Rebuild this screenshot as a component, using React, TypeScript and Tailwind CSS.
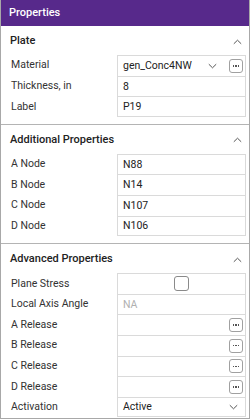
import { ReactNode } from "react";

type Row = {
  label: string;
  value?: ReactNode;
};

function ChevronUp() {
  return (
    <svg width="9" height="6" viewBox="0 0 9 6" fill="none">
      <path d="M0.8 4.8L4.5 1.2L8.2 4.8" stroke="#555" strokeWidth="1" />
    </svg>
  );
}

function ChevronDown() {
  return (
    <svg width="9" height="6" viewBox="0 0 9 6" fill="none">
      <path d="M0.8 1.2L4.5 4.8L8.2 1.2" stroke="#555" strokeWidth="1" />
    </svg>
  );
}

function DotsButton() {
  return (
    <div className="w-[14px] h-[14px] rounded-[3px] border border-[#a0a0a0] bg-white flex items-center justify-center gap-[1px]">
      <span className="w-[1.5px] h-[1.5px] bg-[#555]" />
      <span className="w-[1.5px] h-[1.5px] bg-[#555]" />
      <span className="w-[1.5px] h-[1.5px] bg-[#555]" />
    </div>
  );
}

function Section({ title, rows }: { title: string; rows: Row[] }) {
  return (
    <div className="border-b border-[#b4b4b4] pb-[7px]">
      <div className="h-[29px] pt-[2px] flex items-center justify-between pl-[9px] pr-[7px]">
        <span className="text-[11px] font-medium text-[#222]">{title}</span>
        <ChevronUp />
      </div>
      <div>
        {rows.map((r, i) => (
          <div key={r.label} className="flex h-[20.6px]">
            <div className="w-[116px] pl-[10px] flex items-center text-[10.5px] text-[#333]">
              {r.label}
            </div>
            <div
              className={`flex-1 mr-[3px] border-x border-t border-[#dadada] flex items-center ${
                i === rows.length - 1 ? "border-b" : ""
              }`}
            >
              {r.value}
            </div>
          </div>
        ))}
      </div>
    </div>
  );
}

function Text({ children, muted }: { children: ReactNode; muted?: boolean }) {
  return (
    <span className={`pl-[5px] text-[10.5px] ${muted ? "text-[#b0b0b0]" : "text-[#222]"}`}>
      {children}
    </span>
  );
}

export default function App() {
  const plate: Row[] = [
    {
      label: "Material",
      value: (
        <div className="flex items-center w-full pr-[2px]">
          <Text>gen_Conc4NW</Text>
          <span className="ml-auto mr-[12px] flex">
            <ChevronDown />
          </span>
          <DotsButton />
        </div>
      ),
    },
    { label: "Thickness, in", value: <Text>8</Text> },
    { label: "Label", value: <Text>P19</Text> },
  ];

  const additional: Row[] = [
    { label: "A Node", value: <Text>N88</Text> },
    { label: "B Node", value: <Text>N14</Text> },
    { label: "C Node", value: <Text>N107</Text> },
    { label: "D Node", value: <Text>N106</Text> },
  ];

  const release = (
    <div className="ml-auto mr-[2px]">
      <DotsButton />
    </div>
  );

  const advanced: Row[] = [
    {
      label: "Plane Stress",
      value: (
        <div className="w-full flex justify-center">
          <div className="w-[15px] h-[15px] rounded-[3px] border border-[#8a8a8a] bg-white" />
        </div>
      ),
    },
    { label: "Local Axis Angle", value: <Text muted>NA</Text> },
    { label: "A Release", value: release },
    { label: "B Release", value: release },
    { label: "C Release", value: release },
    { label: "D Release", value: release },
    {
      label: "Activation",
      value: (
        <div className="flex items-center w-full">
          <Text>Active</Text>
          <span className="ml-auto mr-[7px] flex">
            <ChevronDown />
          </span>
        </div>
      ),
    },
  ];

  return (
    <div
      className="w-[250px] h-[419px] bg-white border-x border-b border-[#a8a8a8] overflow-hidden"
      style={{ fontFamily: "Roboto, 'Open Sans', sans-serif" }}
    >
      <div className="h-[26px] bg-[#57298b] flex items-center pl-[8px] text-white text-[11px] font-medium">
        Properties
      </div>
      <Section title="Plate" rows={plate} />
      <Section title="Additional Properties" rows={additional} />
      <Section title="Advanced Properties" rows={advanced} />
    </div>
  );
}
